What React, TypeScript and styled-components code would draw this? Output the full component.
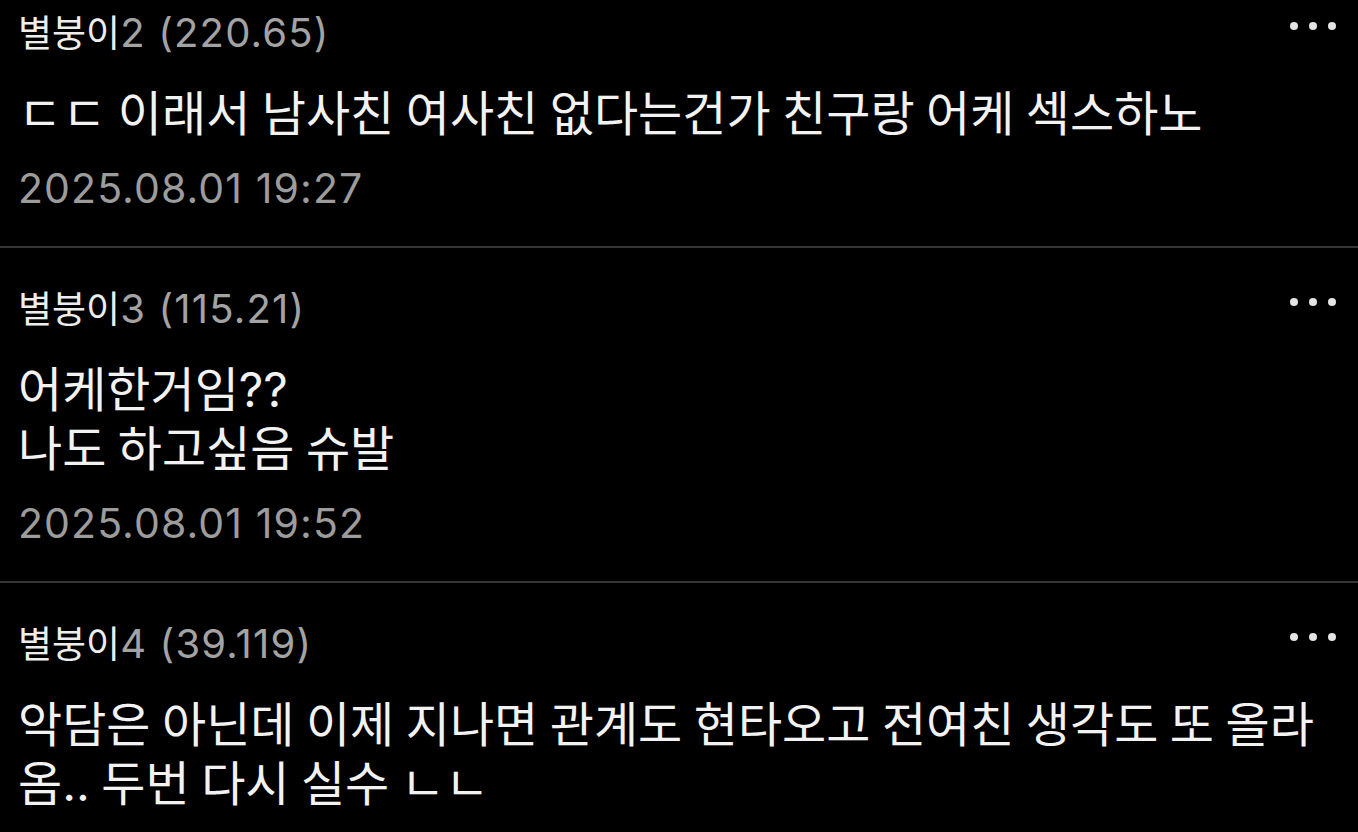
import React from "react";
import styled, { createGlobalStyle } from "styled-components";

const GlobalStyle = createGlobalStyle`
  html, body {
    margin: 0;
    padding: 0;
    background: #000;
  }
  body {
    font-family: "Inter", "Noto Sans CJK KR", sans-serif;
    -webkit-font-smoothing: antialiased;
  }
`;

const Screen = styled.div`
  width: 1358px;
  height: 832px;
  overflow: hidden;
  background: #000;
  display: flex;
  flex-direction: column;
`;

const Item = styled.section<{ $first?: boolean; $last?: boolean }>`
  padding: ${(p) => (p.$first ? "8px" : "36px")} 22px 33px 18px;
  border-bottom: ${(p) => (p.$last ? "none" : "2px solid #353535")};
  display: flex;
  flex-direction: column;
`;

const Header = styled.div`
  display: flex;
  justify-content: space-between;
  align-items: flex-start;
`;

const Author = styled.div`
  display: flex;
  align-items: baseline;
  height: 46px;
  line-height: 46px;
  white-space: nowrap;
`;

const Nick = styled.span`
  font-family: "Noto Sans CJK KR", sans-serif;
  font-size: 37px;
  color: #ededed;
`;

const Meta = styled.span`
  font-family: "Inter", "Noto Sans CJK KR", sans-serif;
  font-size: 40px;
  color: #a3a3a3;
  letter-spacing: 1.2px;
`;

const More = styled.div`
  display: flex;
  gap: 11px;
  margin-top: 14px;
`;

const Dot = styled.span`
  width: 8px;
  height: 8px;
  border-radius: 50%;
  background: #e4e4e4;
`;

const Body = styled.p`
  margin: 30px 0 0;
  font-family: "Inter", "Noto Sans CJK KR", sans-serif;
  font-size: 48px;
  line-height: 59px;
  color: #f2f2f2;
  word-spacing: -2px;
  white-space: pre-line;
  word-break: keep-all;
`;

const Stamp = styled.div`
  margin-top: 20px;
  font-family: "Inter", "Noto Sans CJK KR", sans-serif;
  font-size: 41px;
  line-height: 50px;
  color: #9c9c9c;
  letter-spacing: 1.1px;
`;

type Comment = {
  nick: string;
  meta: string;
  body: string;
  date: string;
};

const comments: Comment[] = [
  {
    nick: "별붕이",
    meta: "2 (220.65)",
    body: "ㄷㄷ 이래서 남사친 여사친 없다는건가 친구랑 어케 섹스하노",
    date: "2025.08.01 19:27",
  },
  {
    nick: "별붕이",
    meta: "3 (115.21)",
    body: "어케한거임??\n나도 하고싶음 슈발",
    date: "2025.08.01 19:52",
  },
  {
    nick: "별붕이",
    meta: "4 (39.119)",
    body: "악담은 아닌데 이제 지나면 관계도 현타오고 전여친 생각도 또 올라 옴.. 두번 다시 실수 ㄴㄴ",
    date: "",
  },
];

export default function App() {
  return (
    <>
      <GlobalStyle />
      <Screen>
        {comments.map((c, i) => (
          <Item key={i} $first={i === 0} $last={i === comments.length - 1}>
            <Header>
              <Author>
                <Nick>{c.nick}</Nick>
                <Meta>{c.meta}</Meta>
              </Author>
              <More aria-label="더보기">
                <Dot />
                <Dot />
                <Dot />
              </More>
            </Header>
            <Body>{c.body}</Body>
            {c.date && <Stamp>{c.date}</Stamp>}
          </Item>
        ))}
      </Screen>
    </>
  );
}
